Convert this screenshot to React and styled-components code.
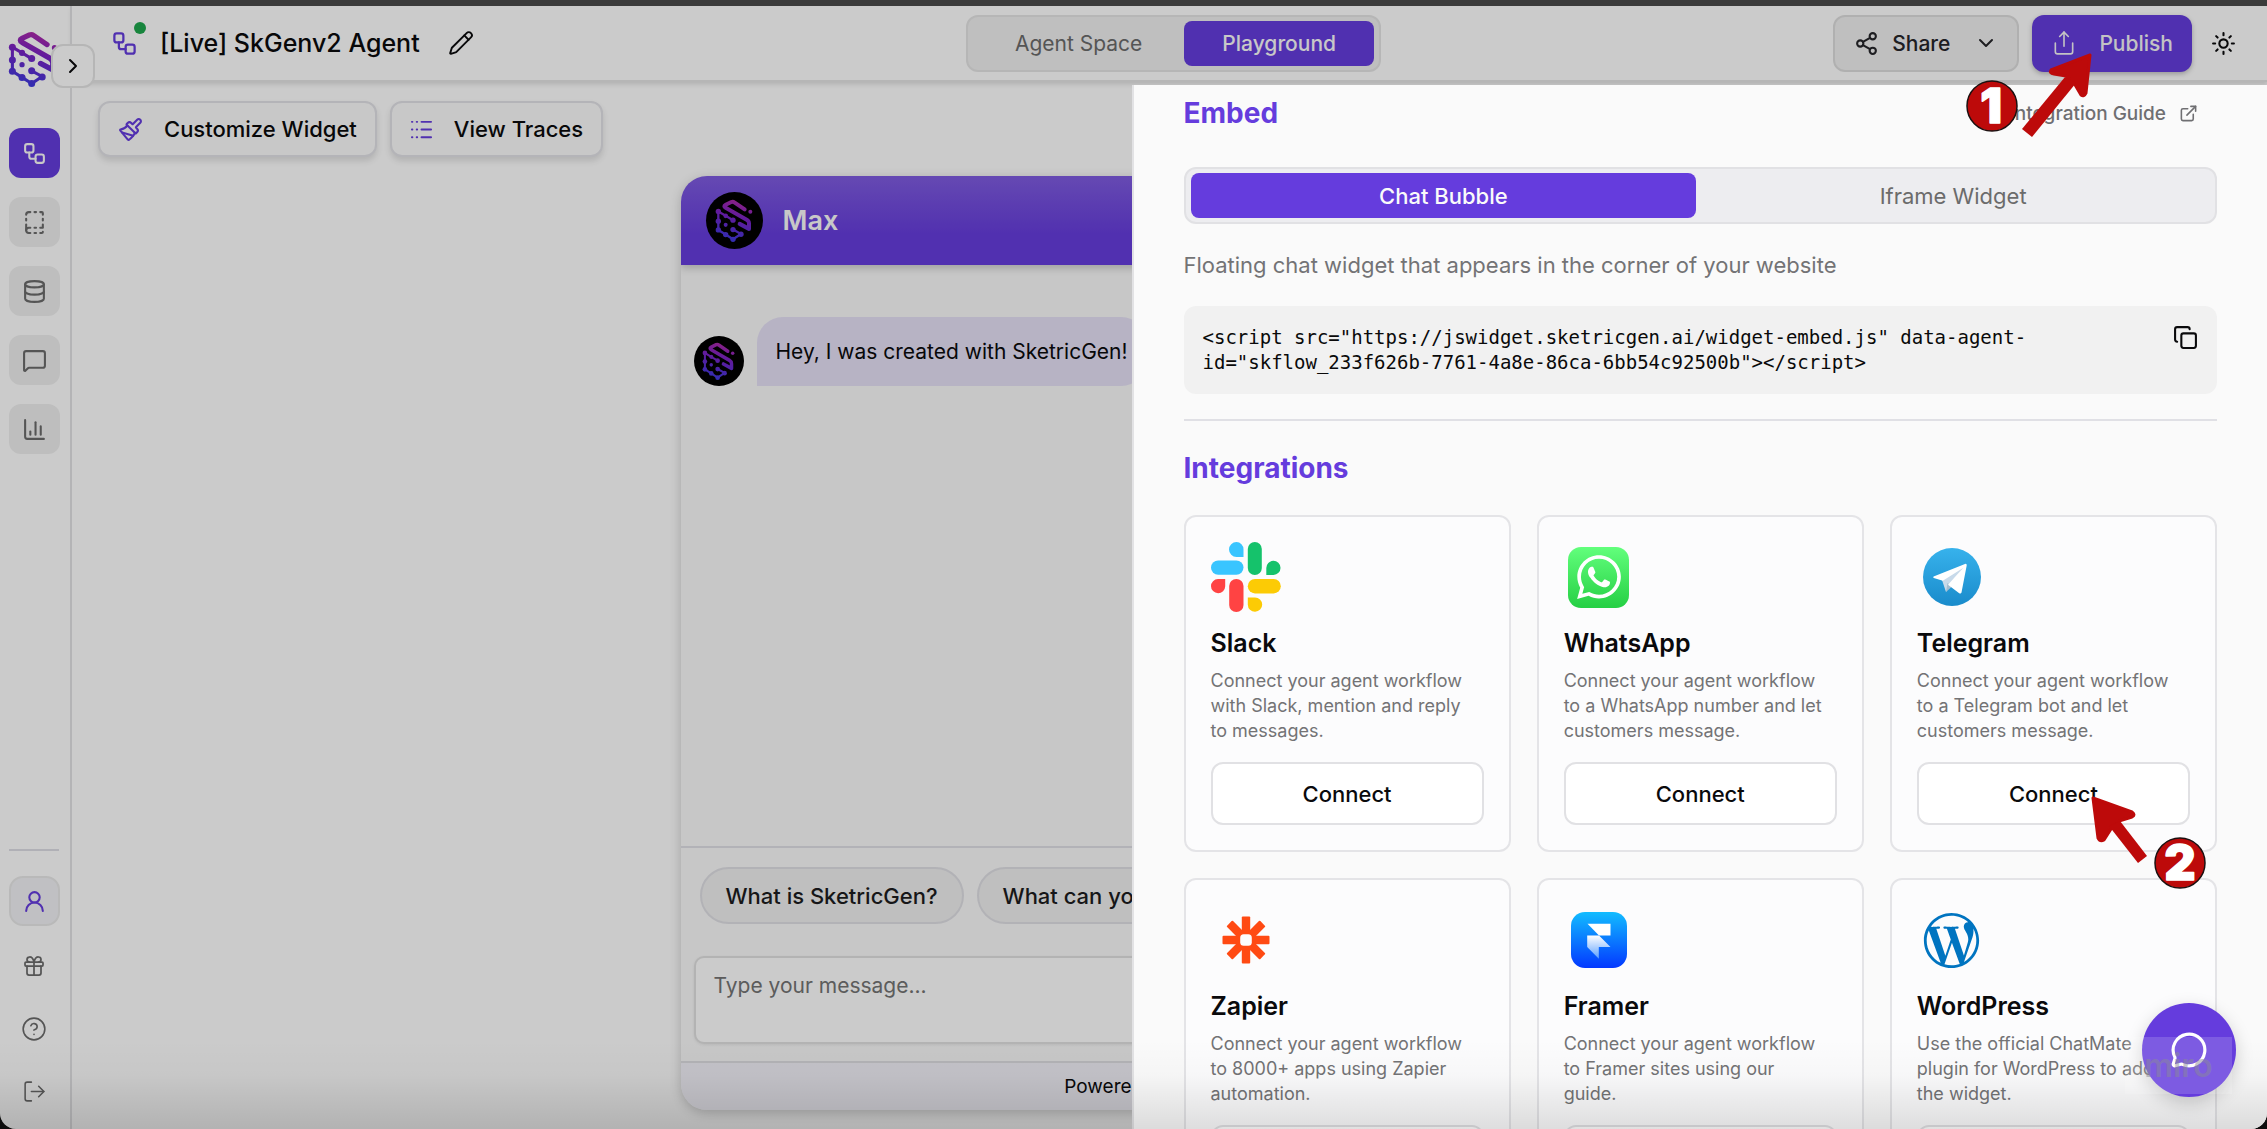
import React from 'react'
import { styled, createGlobalStyle } from 'styled-components'
import {
  Workflow,
  BookDashed,
  Database,
  MessageSquare,
  ChartColumn,
  UserRound,
  Gift,
  CircleHelp,
  LogOut,
  ChevronRight,
  ChevronDown,
  Pencil,
  Paintbrush,
  Share2,
  Share,
  Sun,
  ExternalLink,
  Copy,
  MessageCircle
} from 'lucide-react'
import { FaWhatsapp, FaWordpressSimple } from 'react-icons/fa'

const GlobalStyle=createGlobalStyle`
*{
box-sizing: border-box;
}
body{
margin: 0;
background-color: #0c0c0c;
font-family: Inter, "Liberation Sans", sans-serif;
color: #0a0a0c;
}
button, textarea{
font-family: inherit;
color: inherit;
}
button{
cursor: pointer;
}
`

const Page=styled.div`
position: relative;
height: 100vh;
display: flex;
flex-direction: column;
overflow: hidden;
background-color: #fefefe;
border-radius: 0 0 16px 16px;
`
const TopStrip=styled.div`
position: relative;
z-index: 3;
flex: none;
height: 6px;
background-color: #3b3b3b;
`
const Shell=styled.div`
flex: 1;
min-height: 0;
display: flex;
`

/* sidebar */
const Sidebar=styled.aside`
position: relative;
z-index: 1;
flex: none;
width: 72px;
border-right: 2px solid #e2e2e4;
display: flex;
flex-direction: column;
align-items: center;
justify-content: space-between;
padding: 25px 2px 14px 0;
`
const SidebarGroup=styled.nav`
display: flex;
flex-direction: column;
align-items: center;
gap: ${props=>props.$gap}px;
`
const SidebarLogo=styled.div`
height: 78px;
padding-right: 2px;
`
const NavButton=styled.button`
width: 51px;
height: 50px;
display: flex;
align-items: center;
justify-content: center;
border: none;
border-radius: 12px;
color: ${props=>props.$active ? '#fafafa' : '#6b6b6b'};
background-color: ${props=>props.$active ? '#653cdd' : '#eeeeee'};
`
const ProfileButton=styled(NavButton)`
border: 2px solid #e8e8e8;
border-radius: 14px;
color: #653cdd;
background-color: #f0f1f4;
`
const PlainButton=styled.button`
width: 50px;
height: 47px;
display: flex;
align-items: center;
justify-content: center;
border: none;
background: none;
color: #6b6b6b;
`
const SidebarLine=styled.hr`
width: 50px;
margin: 0 0 9px;
border: none;
border-top: 2px solid #dddde4;
`
const ExpandButton=styled.button`
position: absolute;
top: 38px;
right: -25px;
width: 44px;
height: 44px;
display: flex;
align-items: center;
justify-content: center;
border: 2px solid #e4e4e4;
border-radius: 12px;
background-color: #fefefe;
`

/* header */
const Main=styled.main`
flex: 1;
min-width: 0;
display: flex;
flex-direction: column;
`
const Header=styled.header`
flex: none;
height: 76px;
display: grid;
grid-template-columns: 1fr auto 1fr;
align-items: center;
padding: 0 31px 0 39px;
border-bottom: 2px solid #e4e4e4;
box-shadow: 0 2px 5px rgba(0, 0, 0, 0.14);
`
const TitleGroup=styled.div`
display: flex;
align-items: center;
gap: 22px;
`
const Title=styled.h1`
margin: 0;
padding-right: 6px;
font-size: 25px;
font-weight: 500;
`
const FlowMark=styled.span`
position: relative;
display: flex;
color: #653cdd;
`
const LiveDot=styled.span`
position: absolute;
top: -8px;
right: -8px;
width: 12px;
height: 12px;
border-radius: 50%;
background-color: #1fa74d;
`
const IconButton=styled.button`
display: flex;
padding: 0;
border: none;
background: none;
`
const Segments=styled.div`
display: flex;
height: 57px;
padding: 4px 5px;
border: 2px solid ${props=>props.$light ? '#e1e1e4' : '#e4e4e4'};
border-radius: 12px;
background-color: ${props=>props.$light ? '#ededf0' : '#efefef'};
`
const Segment=styled.button`
flex: ${props=>props.$grow ? 1 : 'none'};
padding: 0 ${props=>props.$active ? 38 : 42}px;
border: none;
border-radius: 8px;
font-size: ${props=>props.$grow ? 22 : 21}px;
font-weight: ${props=>props.$active ? 500 : 400};
color: ${props=>props.$active ? '#fafafa' : '#6b6b6b'};
background-color: ${props=>props.$active ? '#653cdd' : 'transparent'};
`
const HeaderActions=styled.div`
display: flex;
align-items: center;
justify-content: flex-end;
gap: 13px;
`
const HeaderButton=styled.button`
height: 57px;
display: flex;
align-items: center;
gap: ${props=>props.$primary ? 22 : 13}px;
padding: 0 19px;
border: ${props=>props.$primary ? 'none' : '2px solid #dddddd'};
border-radius: 12px;
font-size: 21px;
font-weight: 500;
color: ${props=>props.$primary ? '#f4f4f6' : '#26262a'};
background-color: ${props=>props.$primary ? '#653cdd' : '#efefef'};
box-shadow: ${props=>props.$primary ? '0 2px 5px rgba(0, 0, 0, 0.25)' : 'none'};
`
const ShareLabel=styled.span`
padding-right: 11px;
`
const SunButton=styled(IconButton)`
padding-left: 6px;
`

/* toolbar and chat preview */
const Content=styled.div`
flex: 1;
min-height: 0;
display: flex;
flex-direction: column;
gap: 19px;
padding: 19px 26px;
`
const Toolbar=styled.div`
flex: none;
display: flex;
gap: 13px;
`
const ToolButton=styled.button`
height: 56px;
display: flex;
align-items: center;
gap: 21px;
padding: 0 18px;
border: 2px solid #e1e1e6;
border-radius: 12px;
font-size: 22px;
font-weight: 500;
background-color: #fafafa;
box-shadow: 0 4px 6px rgba(0, 0, 0, 0.12);

svg{
color: #653cdd;
}
`
const Chat=styled.section`
flex: 1;
min-height: 0;
width: 100%;
max-width: 978px;
margin: 0 auto;
display: flex;
flex-direction: column;
border-radius: 26px;
background-color: #f9f9f9;
box-shadow: 0 3px 12px rgba(0, 0, 0, 0.2);
overflow: hidden;
`
const ChatHeader=styled.div`
flex: none;
height: 89px;
display: flex;
align-items: center;
gap: 20px;
padding: 0 25px;
font-size: 27px;
font-weight: 600;
color: #fafafa;
background: linear-gradient(#7f5ce0, #663ddc 65%);
box-shadow: 0 3px 8px rgba(0, 0, 0, 0.2);
`
const Avatar=styled.span`
flex: none;
width: ${props=>props.$size}px;
height: ${props=>props.$size}px;
display: flex;
align-items: center;
justify-content: center;
border-radius: 50%;
background-color: black;
`
const ChatBody=styled.div`
flex: 1;
min-height: 0;
padding: 52px 13px;
border-bottom: 2px solid #dfdfe5;
`
const Message=styled.div`
display: flex;
align-items: flex-end;
gap: 13px;
`
const Bubble=styled.p`
margin: 0;
height: 69px;
display: flex;
align-items: center;
padding: 0 19px;
border-radius: 26px 26px 26px 0;
font-size: 21px;
background-color: #e5e0f6;
`
const Composer=styled.div`
flex: none;
display: flex;
flex-direction: column;
gap: 32px;
padding: 19px 13px 17px;
`
const Chips=styled.div`
display: flex;
gap: 13px;
padding-left: 6px;
`
const Chip=styled.button`
height: 57px;
padding: 0 24px;
border: 2px solid #dfdfe4;
border-radius: 29px;
font-size: 22px;
font-weight: 500;
color: #1c1c20;
background-color: #efefef;
`
const MessageBox=styled.textarea`
display: block;
width: 100%;
height: 88px;
padding: 13px 18px;
resize: none;
border: 2px solid #e0e0e0;
border-radius: 10px;
font-size: 21px;
line-height: 30px;
background-color: #fefefe;
box-shadow: 0 1px 3px rgba(0, 0, 0, 0.08);

&::placeholder{
color: #737373;
}
`
const Powered=styled.div`
flex: none;
height: 49px;
display: flex;
align-items: center;
justify-content: center;
border-top: 2px solid #dfdfe3;
font-size: 19px;
background-color: #f4f3fb;
`

/* drawer */
const Backdrop=styled.div`
position: absolute;
inset: 0;
z-index: 2;
background-color: rgba(0, 0, 0, 0.2);
`
const Drawer=styled.aside`
position: absolute;
z-index: 3;
top: 85px;
right: 0;
bottom: 0;
width: calc(50% + 2px);
padding: 10px 50px 0;
border-left: 2px solid #e2e2e4;
background-color: #fafafa;
overflow: hidden;
`
const DrawerHead=styled.div`
display: flex;
align-items: center;
justify-content: space-between;
margin-bottom: 36px;
padding-right: 19px;
`
const Heading=styled.h2`
margin: 0;
font-size: 28px;
line-height: 36px;
font-weight: 700;
color: #653cdd;
`
const GuideLink=styled.a`
display: flex;
align-items: center;
gap: 13px;
font-size: 19px;
font-weight: 500;
color: #6f6f72;
text-decoration: none;
`
const Hint=styled.p`
margin: 24px 0;
font-size: 22px;
line-height: 34px;
color: #737375;
`
const CodeBox=styled.div`
display: flex;
align-items: flex-start;
justify-content: space-between;
padding: 19px;
border-radius: 12px;
background-color: #f1f1f1;
`
const Code=styled.code`
max-width: 850px;
font-family: "DejaVu Sans Mono", monospace;
font-size: 19px;
line-height: 25px;
color: #0a0a0a;
`
const Divider=styled.hr`
margin: 25px 0 29px;
border: none;
border-top: 2px solid #e0e0e5;
`
const Cards=styled.div`
display: grid;
grid-template-columns: repeat(3, 1fr);
gap: 26px;
padding-top: 29px;
`
const Card=styled.article`
display: flex;
flex-direction: column;
padding: 25px;
border: 2px solid #e4e4e7;
border-radius: 12px;
background-color: #fcfcfd;
`
const IconSlot=styled.div`
width: 70px;
height: 70px;
display: flex;
align-items: center;
justify-content: center;
`
const CardTitle=styled.h3`
margin: 14px 0 8px;
font-size: 25px;
line-height: 34px;
font-weight: 600;
`
const CardText=styled.p`
margin: 0 0 19px;
font-size: 18px;
line-height: 25px;
white-space: pre-line;
color: #737375;
`
const ConnectButton=styled.button`
height: 63px;
border: 2px solid #e1e1e4;
border-radius: 12px;
font-size: 22px;
font-weight: 500;
background-color: #ffffff;
`
const WhatsappTile=styled.div`
width: 61px;
height: 61px;
display: flex;
align-items: center;
justify-content: center;
border-radius: 13px;
color: white;
background: linear-gradient(#62ff7c, #25cf44);
`

/* things floating over the page */
const BottomShade=styled.div`
position: absolute;
z-index: 4;
left: 0;
right: 0;
bottom: 0;
height: 90px;
pointer-events: none;
background: linear-gradient(rgba(0, 0, 0, 0), rgba(0, 0, 0, 0.02) 40%, rgba(0, 0, 0, 0.12));
`
const ChatFab=styled.button`
position: absolute;
z-index: 5;
right: 31px;
bottom: 32px;
width: 94px;
height: 94px;
display: flex;
align-items: center;
justify-content: center;
border: none;
border-radius: 50%;
color: white;
background-color: #653cdd;
box-shadow: 0 6px 18px rgba(0, 0, 0, 0.18);
`
const Watermark=styled.div`
position: absolute;
z-index: 6;
right: 35px;
bottom: 35px;
width: 107px;
height: 57px;
display: flex;
align-items: center;
justify-content: center;
font-size: 32px;
font-weight: 600;
color: rgba(138, 138, 150, 0.5);
background-color: rgba(255, 255, 255, 0.16);
`
const Marker=styled.svg`
position: absolute;
z-index: 7;
top: ${props=>props.$top}px;
right: ${props=>props.$right}px;
pointer-events: none;
`

const BrandMark = ({ id, width, height }) => {
  const paint=`url(#${id})`
  return (
    <svg width={width} height={height} viewBox="168 118 114 128" preserveAspectRatio="none" aria-hidden="true">
        <defs>
          <linearGradient id={id} gradientUnits="userSpaceOnUse" x1="240" y1="118" x2="205" y2="246">
            <stop offset="0" stopColor="#b22aa5" />
            <stop offset="0.4" stopColor="#7a22c4" />
            <stop offset="1" stopColor="#3a3be0" />
          </linearGradient>
        </defs>
        <g fill="none" stroke={paint} strokeWidth="12" strokeLinejoin="round" strokeLinecap="round">
          <path d="M257 149 226 128Q222 125 217 127L200 135Q192 139 200 144L263 180Q270 184 270 191V207L242 192" />
          <path d="M178 155 200 168 222 181" strokeWidth="7" />
          <path d="M178 155V210L200 224 222 238 246 222 222 209" strokeWidth="7" />
        </g>
        <g fill={paint}>
          <circle cx="274" cy="156" r="6" />
          <circle cx="178" cy="155" r="8" />
          <circle cx="200" cy="168" r="7" />
          <circle cx="222" cy="181" r="8" />
          <circle cx="178" cy="184" r="8" />
          <circle cx="178" cy="210" r="8" />
          <circle cx="200" cy="195" r="6" />
          <circle cx="200" cy="224" r="8" />
          <circle cx="222" cy="238" r="8" />
          <circle cx="246" cy="223" r="8" />
          <circle cx="222" cy="209" r="8" />
        </g>
    </svg>
  )
}

const TracesIcon = () => (
  <svg width="23" height="23" viewBox="0 0 24 24" fill="none" stroke="currentColor" strokeWidth="2" strokeLinecap="round">
      <path d="M2 4h.5M7 4h.5M12 4h10M2 12h.5M7 12h.5M12 12h10M2 20h.5M7 20h.5M12 20h10" />
  </svg>
)

const SlackLogo = () => (
  <svg width="70" height="70" viewBox="0 0 70 70">
      <path fill="#39c5ff" d="M25.500 0a7.200 7.200 0 0 1 7 7.200V15h-7a7.400 7.400 0 0 1 0-15Z" />
      <rect fill="#39c5ff" y="18.400" width="32.500" height="14.400" rx="7.200" />
      <rect fill="#15c26b" x="36.800" width="14" height="33" rx="7" />
      <path fill="#15c26b" d="M55.300 33v-7a7.100 7.100 0 1 1 7.200 7Z" />
      <path fill="#ff4343" d="M14.200 37v7.200a7.100 7.100 0 1 1-7.200-7.200Z" />
      <rect fill="#ff4343" x="18.200" y="37" width="14.300" height="33" rx="7.100" />
      <rect fill="#fccb05" x="36.800" y="37" width="33" height="14.400" rx="7.200" />
      <path fill="#fccb05" d="M36.800 55.400h7.100a7.200 7.200 0 1 1-7.100 7.300Z" />
  </svg>
)

const WhatsappLogo = () => (
  <WhatsappTile>
      <FaWhatsapp size={50} />
  </WhatsappTile>
)

const TelegramLogo = () => (
  <svg width="58" height="58" viewBox="0 0 58 58">
      <defs>
        <linearGradient id="telegram" x1="0" y1="0" x2="0" y2="1">
          <stop offset="0" stopColor="#37b2ec" />
          <stop offset="1" stopColor="#1a8bcb" />
        </linearGradient>
      </defs>
      <circle cx="29" cy="29" r="29" fill="url(#telegram)" />
      <path fill="#c8daea" d="M19 32 43 16 27 38 23 44Z" />
      <path fill="#a3bdd0" d="M23 44 24.500 35 29 38.500Z" />
      <path fill="white" d="M10.600 28.500 42 15.900q2-.5 1.700 1.500L38.500 44.500q-.6 1.800-2.300.7L25 36.800 40 20 19.800 32.800 10.800 30q-1.200-.7-.2-1.500Z" />
  </svg>
)

const ZapierLogo = () => (
  <svg width="48" height="48" viewBox="-24 -24 48 48" fill="#ff4a13">
      {[0, 45, 90, 135].map(angle=>(
        <rect key={angle} x="-4.200" y="-23.500" width="8.400" height="47" rx="1" transform={`rotate(${angle})`} />
      ))}
      <rect x="-8" y="-8" width="16" height="16" />
      <rect x="-5.800" y="-5.800" width="11.600" height="11.600" rx="3.500" fill="#fcfcfd" />
  </svg>
)

const FramerLogo = () => (
  <svg width="56" height="56" viewBox="0 0 56 56">
      <defs>
        <linearGradient id="framer" x1="0" y1="0" x2="0" y2="1">
          <stop offset="0" stopColor="#12bcff" />
          <stop offset="1" stopColor="#0338ff" />
        </linearGradient>
        <linearGradient id="framerFold" x1="0" y1="0" x2="0" y2="1">
          <stop offset="0" stopColor="#ffffff" />
          <stop offset="1" stopColor="#5ba0ff" />
        </linearGradient>
      </defs>
      <rect width="56" height="56" rx="14" fill="url(#framer)" />
      <path fill="white" d="M16.500 11.700H39.500V23.400H28Z" />
      <path fill="url(#framerFold)" d="M16.200 23.400H28L39.500 35H27.800V46.800L16.200 35Z" />
  </svg>
)

const WordpressLogo = () => <FaWordpressSimple size={57} color="#0074c0" />

const navItems=[
  { name: 'Agents', icon: Workflow, active: true },
  { name: 'Templates', icon: BookDashed },
  { name: 'Data', icon: Database },
  { name: 'Messages', icon: MessageSquare },
  { name: 'Analytics', icon: ChartColumn }
]

const integrations=[
  { name: 'Slack', logo: SlackLogo, text: 'Connect your agent workflow\nwith Slack, mention and reply\nto messages.' },
  { name: 'WhatsApp', logo: WhatsappLogo, text: 'Connect your agent workflow\nto a WhatsApp number and let\ncustomers message.' },
  { name: 'Telegram', logo: TelegramLogo, text: 'Connect your agent workflow\nto a Telegram bot and let\ncustomers message.' },
  { name: 'Zapier', logo: ZapierLogo, text: 'Connect your agent workflow\nto 8000+ apps using Zapier\nautomation.' },
  { name: 'Framer', logo: FramerLogo, text: 'Connect your agent workflow\nto Framer sites using our\nguide.' },
  { name: 'WordPress', logo: WordpressLogo, text: 'Use the official ChatMate\nplugin for WordPress to add\nthe widget.' }
]

const SideNav = () => {
  return (
    <Sidebar>
        <SidebarGroup $gap={19}>
          <SidebarLogo>
            <BrandMark id="brandSide" width={50} height={56} />
          </SidebarLogo>
          {navItems.map(item=>(
            <NavButton key={item.name} $active={item.active} aria-label={item.name}>
                <item.icon size={25} />
            </NavButton>
          ))}
        </SidebarGroup>
        <SidebarGroup $gap={16}>
          <SidebarLine />
          <ProfileButton aria-label="Profile"><UserRound size={25} /></ProfileButton>
          <PlainButton aria-label="Rewards"><Gift size={24} strokeWidth={1.75} /></PlainButton>
          <PlainButton aria-label="Help"><CircleHelp size={26} strokeWidth={1.5} /></PlainButton>
          <PlainButton aria-label="Log out"><LogOut size={25} strokeWidth={1.5} /></PlainButton>
        </SidebarGroup>
        <ExpandButton aria-label="Expand sidebar"><ChevronRight size={24} /></ExpandButton>
    </Sidebar>
  )
}

const TopBar = () => {
  return (
    <Header>
        <TitleGroup>
          <FlowMark><Workflow size={27} /><LiveDot /></FlowMark>
          <Title>[Live] SkGenv2 Agent</Title>
          <IconButton aria-label="Rename"><Pencil size={26} strokeWidth={1.75} /></IconButton>
        </TitleGroup>
        <Segments>
          <Segment>Agent Space</Segment>
          <Segment $active>Playground</Segment>
        </Segments>
        <HeaderActions>
          <HeaderButton>
            <Share2 size={25} />
            <ShareLabel>Share</ShareLabel>
            <ChevronDown size={24} />
          </HeaderButton>
          <HeaderButton $primary>
            <Share size={26} strokeWidth={1.5} />
            Publish
          </HeaderButton>
          <SunButton aria-label="Light theme"><Sun size={25} /></SunButton>
        </HeaderActions>
    </Header>
  )
}

const ChatPreview = () => {
  return (
    <Chat>
        <ChatHeader>
          <Avatar $size={57}><BrandMark id="brandHead" width={38} height={43} /></Avatar>
          Max
        </ChatHeader>
        <ChatBody>
          <Message>
            <Avatar $size={50}><BrandMark id="brandMessage" width={33} height={38} /></Avatar>
            <Bubble>Hey, I was created with SketricGen!</Bubble>
          </Message>
        </ChatBody>
        <Composer>
          <Chips>
            <Chip>What is SketricGen?</Chip>
            <Chip>What can you do?</Chip>
          </Chips>
          <MessageBox aria-label="Message" placeholder="Type your message..." />
        </Composer>
        <Powered>Powered by SketricGen</Powered>
    </Chat>
  )
}

const PublishDrawer = () => {
  return (
    <Drawer>
        <DrawerHead>
          <Heading>Embed</Heading>
          <GuideLink href="#guide">Integration Guide <ExternalLink size={19} /></GuideLink>
        </DrawerHead>
        <Segments $light>
          <Segment $active $grow>Chat Bubble</Segment>
          <Segment $grow>Iframe Widget</Segment>
        </Segments>
        <Hint>Floating chat widget that appears in the corner of your website</Hint>
        <CodeBox>
          <Code>{'<script src="https://jswidget.sketricgen.ai/widget-embed.js" data-agent-id="skflow_233f626b-7761-4a8e-86ca-6bb54c92500b"></script>'}</Code>
          <IconButton aria-label="Copy code"><Copy size={25} /></IconButton>
        </CodeBox>
        <Divider />
        <Heading>Integrations</Heading>
        <Cards>
          {integrations.map(item=>(
            <Card key={item.name}>
                <IconSlot><item.logo /></IconSlot>
                <CardTitle>{item.name}</CardTitle>
                <CardText>{item.text}</CardText>
                <ConnectButton>Connect</ConnectButton>
            </Card>
          ))}
        </Cards>
    </Drawer>
  )
}

const Markers = () => {
  return (
    <>
        <Marker $top={45} $right={167} width="140" height="100" viewBox="1960 45 140 100">
          <circle cx="1992" cy="106" r="25" fill="#bd0a0a" stroke="#1c1010" strokeWidth="1.500" />
          <text x="1991" y="123" textAnchor="middle" fontFamily="Inter" fontSize="48" fontWeight="900" fill="white" stroke="white" strokeWidth="1.500" strokeLinejoin="round">1</text>
          <path fill="#bd0a0a" stroke="#bd0a0a" strokeWidth="3" strokeLinejoin="round" d="M2090 55 2051 70Q2049 73 2054 74L2066 76 2074 83 2081 95Q2084 97 2086 93Z" />
          <path fill="#bd0a0a" d="M2065 77 2022 129 2032 137 2076 83Z" />
        </Marker>
        <Marker $top={790} $right={57} width="125" height="105" viewBox="2085 790 125 105">
          <circle cx="2180" cy="863" r="25" fill="#bd0a0a" stroke="#1c1010" strokeWidth="1.500" />
          <text x="2180" y="880" textAnchor="middle" fontFamily="Inter" fontSize="48" fontWeight="900" fill="white" stroke="white" strokeWidth="1.500" strokeLinejoin="round">2</text>
          <path fill="#bd0a0a" stroke="#bd0a0a" strokeWidth="3" strokeLinejoin="round" d="M2093 798 2132 812Q2136 815 2132 817L2119 821 2111 829 2104 840Q2100 842 2098 838Z" />
          <path fill="#bd0a0a" d="M2120 821 2147 856 2138 863 2109 826Z" />
        </Marker>
    </>
  )
}

const App = () => {
  return (
    <Page>
        <GlobalStyle />
        <TopStrip />
        <Shell>
          <SideNav />
          <Main>
            <TopBar />
            <Content>
              <Toolbar>
                <ToolButton><Paintbrush size={25} />Customize Widget</ToolButton>
                <ToolButton><TracesIcon />View Traces</ToolButton>
              </Toolbar>
              <ChatPreview />
            </Content>
          </Main>
        </Shell>
        <Backdrop />
        <PublishDrawer />
        <BottomShade />
        <ChatFab aria-label="Open chat"><MessageCircle size={38} /></ChatFab>
        <Watermark>miro</Watermark>
        <Markers />
    </Page>
  )
}

export default App
